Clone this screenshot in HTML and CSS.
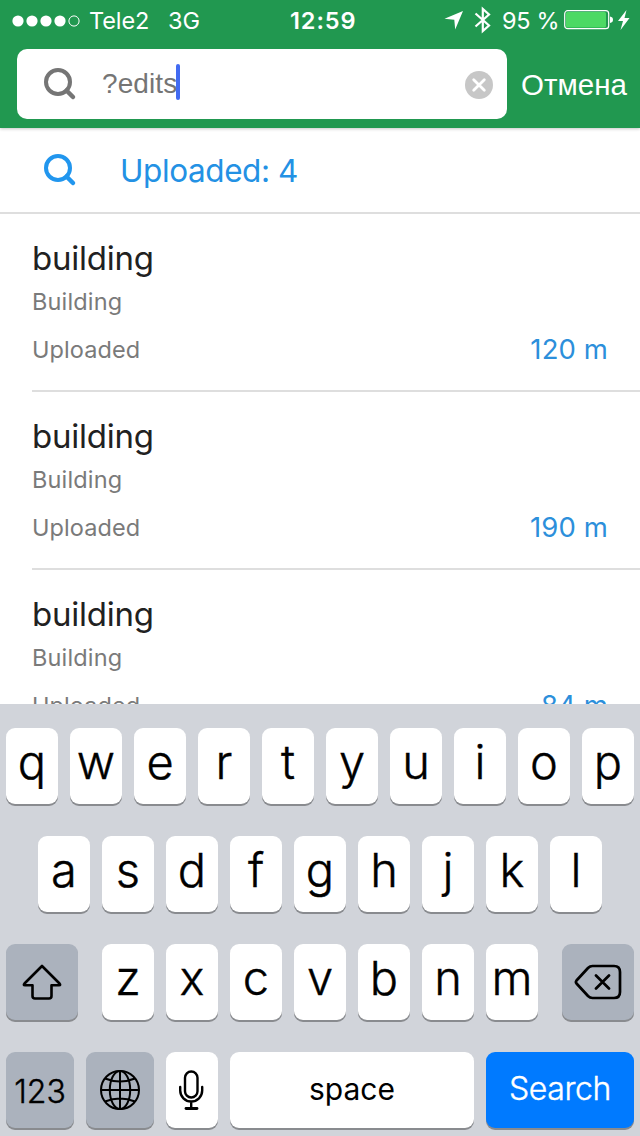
FILE: index.html
```html
<!DOCTYPE html>
<html lang="en">
<head>
<meta charset="utf-8">
<title>Search</title>
<link rel="stylesheet" href="styles.css">
</head>
<body>
<div class="screen">
  <header class="header">
    <div class="status">
      <svg class="signal" width="68" height="12" viewBox="0 0 68 12" fill="#fff"><circle cx="6" cy="6" r="5.6"/><circle cx="20" cy="6" r="5.6"/><circle cx="34" cy="6" r="5.6"/><circle cx="48" cy="6" r="5.6"/><circle cx="62" cy="6" r="5.1" fill="none" stroke="#fff"/></svg>
      <span class="carrier">Tele2</span>
      <span class="network">3G</span>
      <span class="clock">12:59</span>
      <svg class="location" width="20" height="20" viewBox="0 0 20 20"><path d="M19 1 0.5 8.8 10.3 9.7 11.2 19.5Z" fill="#fff"/></svg>
      <svg class="bluetooth" width="18" height="28" viewBox="0 0 18 28" fill="none" stroke="#fff" stroke-width="2.2"><path d="M1.500 7.500 15 19.500 8.800 25V3L15 8.500 1.500 20.500"/></svg>
      <span class="percent">95 %</span>
      <svg class="battery" width="50" height="20" viewBox="0 0 50 20"><rect x=".7" y=".7" width="44" height="18" rx="3" fill="none" stroke="#fff" stroke-width="1.2"/><rect x="2" y="2" width="40" height="15.4" rx="1.5" fill="#4cd964"/><path d="M46 6.500Q49 7 49 9.700T46 13Z" fill="#fff"/></svg>
      <svg class="bolt" width="12" height="20" viewBox="0 0 12 20"><path d="M8.500 0 0 11H5L2.500 20 11.500 8H6.500Z" fill="#fff"/></svg>
    </div>
    <div class="search-row">
      <div class="field">
        <svg class="glass" width="34" height="34" viewBox="0 0 34 34" fill="none" stroke="#757575" stroke-width="4"><circle cx="15" cy="15" r="12"/><path d="M23.500 23.500 30 30" stroke-width="4.500" stroke-linecap="round"/></svg>
        <span class="query">?edits</span><span class="caret"></span>
        <svg class="clear" width="28" height="28" viewBox="0 0 28 28"><circle cx="14" cy="14" r="14" fill="#c7c7c7"/><path d="M8.700 8.700 19.300 19.300M19.300 8.700 8.700 19.300" stroke="#fff" stroke-width="2.800" stroke-linecap="round"/></svg>
      </div>
      <span class="cancel">Отмена</span>
    </div>
  </header>
  <main class="results">
    <div class="summary">
      <svg class="glass" width="34" height="34" viewBox="0 0 34 34" fill="none" stroke="#2196ee" stroke-width="4"><circle cx="15" cy="15" r="12"/><path d="M23.500 23.500 30 30" stroke-width="4.500" stroke-linecap="round"/></svg>
      <span class="summary-text">Uploaded: 4</span>
    </div>
    <section class="item"><div class="title">building</div><div class="kind">Building</div><div class="meta"><span class="state">Uploaded</span><span class="distance">120 m</span></div></section>
    <section class="item"><div class="title">building</div><div class="kind">Building</div><div class="meta"><span class="state">Uploaded</span><span class="distance">190 m</span></div></section>
    <section class="item"><div class="title">building</div><div class="kind">Building</div><div class="meta"><span class="state">Uploaded</span><span class="distance">84 m</span></div></section>
  </main>
  <div class="keyboard">
    <div class="keys"><span class="key">q</span><span class="key">w</span><span class="key">e</span><span class="key">r</span><span class="key">t</span><span class="key">y</span><span class="key">u</span><span class="key">i</span><span class="key">o</span><span class="key">p</span></div>
    <div class="keys"><span class="key">a</span><span class="key">s</span><span class="key">d</span><span class="key">f</span><span class="key">g</span><span class="key">h</span><span class="key">j</span><span class="key">k</span><span class="key">l</span></div>
    <div class="keys spread">
      <span class="key dark side"><svg width="40" height="36" viewBox="0 0 40 36" fill="none" stroke="#000" stroke-width="2.600" stroke-linejoin="round"><path d="M20 2 37.500 19.500Q39 21.300 37 21.300H29.500V32Q29.500 34.500 27 34.500H13Q10.500 34.500 10.500 32V21.300H3Q1 21.300 2.500 19.500Z"/></svg></span>
      <div class="group"><span class="key">z</span><span class="key">x</span><span class="key">c</span><span class="key">v</span><span class="key">b</span><span class="key">n</span><span class="key">m</span></div>
      <span class="key dark side"><svg width="48" height="36" viewBox="0 0 48 36" fill="none" stroke="#000" stroke-width="2.700" stroke-linejoin="round" stroke-linecap="round"><path d="M18.500 2H40Q46 2 46 8V28Q46 34 40 34H18.500Q16 34 14 32L2.500 19.500Q1.300 18 2.500 16.500L14 4Q16 2 18.500 2ZM22 11.500 35 24.500M35 11.500 22 24.500"/></svg></span>
    </div>
    <div class="keys">
      <span class="key dark fn numbers">123</span>
      <span class="key dark fn"><svg width="42" height="42" viewBox="0 0 42 42" fill="none" stroke="#000" stroke-width="2"><circle cx="21" cy="21" r="19"/><ellipse cx="21" cy="21" rx="10.200" ry="19"/><path d="M21 2V40M2 21H40M6 9.500Q21 15.500 36 9.500M6 32.500Q21 26.500 36 32.500"/></svg></span>
      <span class="key"><svg width="26" height="42" viewBox="1 0 26 42" fill="none" stroke="#000" stroke-width="2.400" stroke-linecap="round"><rect x="7" y="2.500" width="12.500" height="26" rx="6.250"/><path d="M2.200 18V21.500A11 11 0 0 0 24.200 21.500V18M13.200 33V39"/><path d="M8 39.500H19" stroke-width="2.800"/></svg></span>
      <span class="key space">space</span>
      <span class="key go">Search</span>
    </div>
  </div>
</div>
</body>
</html>
```
FILE: styles.css
```css
body { margin: 0; }
.screen { width: 640px; height: 1136px; display: flex; flex-direction: column; overflow: hidden; background: #fff; font-family: Inter, "Liberation Sans", sans-serif; white-space: nowrap; }
svg { display: block; flex: none; }
.header { height: 128px; flex: none; background: #219850; color: #fff; box-shadow: 0 1px 3px rgba(0,0,0,.22); z-index: 1; }
.status { height: 40px; display: flex; align-items: center; padding-left: 12px; font-size: 23.5px; line-height: 40px; }
.status span { padding-top: 2px; }
.signal { margin-top: 1px; }
.carrier { width: 71px; margin-left: 9px; letter-spacing: -.1px; }
.network { width: 122px; margin-left: 8px; }
.clock { width: 150px; font-weight: 600; letter-spacing: .9px; }
.bluetooth { margin: 0 0 0 10px; }
.percent { width: 62px; margin-left: 10px; letter-spacing: -.3px; }
.location { margin-left: 4px; }
.battery { margin-left: 0; }
.bolt { margin-left: 4px; margin-top: -1px; }
.search-row { height: 70px; margin-top: 9px; display: flex; align-items: center; padding-left: 17px; font-family: "Liberation Sans", Arial, sans-serif; }
.field { width: 490px; height: 70px; box-sizing: border-box; padding: 0 14px 0 26px; display: flex; align-items: center; background: #fff; border-radius: 10px; color: #757575; font-size: 28px; }
.query { margin-left: 25px; line-height: 40px; letter-spacing: .1px; }
.caret { width: 4px; height: 36px; border-radius: 2px; background: #426bf2; margin: -4px 0 0 -1px; }
.clear { margin-left: auto; margin-top: 2px; }
.cancel { margin-left: 14px; font-size: 29.5px; line-height: 40px; margin-top: 2px; }
.results { flex: none; height: 576px; overflow: hidden; }
.summary { height: 84px; display: flex; align-items: center; padding-left: 43px; border-bottom: 2px solid #dedede; color: #2391e4; font-size: 31.5px; }
.summary-text { margin-left: 43px; line-height: 40px; margin-top: 2px; letter-spacing: -.4px; }
.item { height: 152px; margin-left: 32px; padding: 24px 32px 0 0; border-bottom: 2px solid #dedede; }
.title { font-size: 33px; line-height: 40px; color: #212121; letter-spacing: -.25px; }
.kind { margin-top: 10px; font-size: 23.5px; line-height: 28px; color: #7a7a7a; letter-spacing: .15px; }
.meta { margin-top: 20px; display: flex; justify-content: space-between; line-height: 28px; font-size: 23.5px; color: #7a7a7a; letter-spacing: .1px; }
.distance { font-size: 27.5px; color: #2c8fdb; margin-top: -1px; }
.keyboard { height: 432px; flex: none; box-sizing: border-box; padding: 24px 6px 0; background: #d1d4da; display: flex; flex-direction: column; gap: 32px; color: #000; }
.keys, .group { display: flex; gap: 12px; justify-content: center; }
.spread { justify-content: space-between; }
.key { width: 52px; height: 76px; flex: none; border-radius: 9px; background: #fff; box-shadow: 0 2px 0 #898b8f; font-size: 47px; line-height: 68px; font-weight: 300; text-align: center; -webkit-text-stroke: .4px currentColor; }
.key svg { margin: 20px auto 0; }
.dark { background: #abb2bd; }
.side { width: 72px; }
.fn { width: 68px; }
.key.fn svg, .key svg[width="26"] { margin-top: 17px; }
.numbers { font-size: 32px; line-height: 80px; }
.space { width: 244px; font-size: 30px; line-height: 74px; font-weight: 400; -webkit-text-stroke: 0; }
.go { width: 148px; background: #007aff; color: #fff; font-size: 32px; line-height: 74px; letter-spacing: -.4px; }
```
